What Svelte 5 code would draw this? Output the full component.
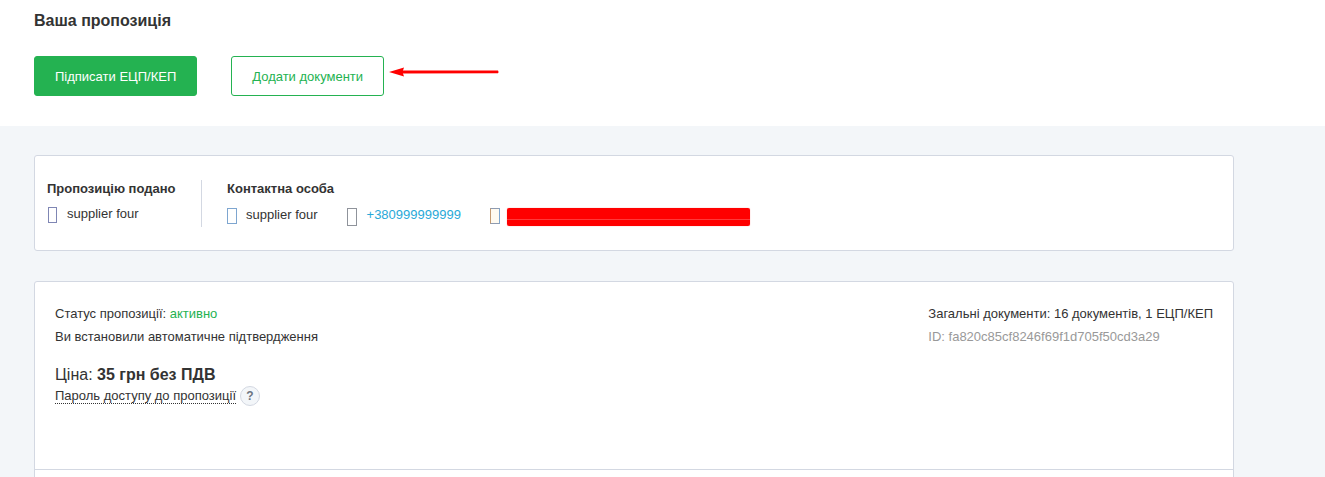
<script lang="ts">
  const docs = '16 документів, 1 ЕЦП/КЕП';
  const bidId = 'fa820c85cf8246f69f1d705f50cd3a29';
</script>

<main class="page">
  <section class="top">
    <h2>Ваша пропозиція</h2>
    <div class="actions">
      <button class="btn primary">Підписати ЕЦП/КЕП</button>
      <button class="btn outline">Додати документи</button>
      <svg class="arrow" width="112" height="12" viewBox="0 0 112 12">
        <path d="M12 4.6 L110 4.4 L110.6 6 L110 7.2 L12 7.6 Z" fill="#f00" />
        <path d="M1 6 L16 1.4 L14.5 6 L16 10.6 Z" fill="#f00" />
      </svg>
    </div>
  </section>

  <section class="content">
    <div class="card contacts">
      <div class="col first">
        <h4>Пропозицію подано</h4>
        <div class="row">
          <span class="item"><i class="tofu indigo"></i>supplier four</span>
        </div>
      </div>
      <div class="col second">
        <h4>Контактна особа</h4>
        <div class="row shifted">
          <span class="item"><i class="tofu blue"></i>supplier four</span>
          <span class="item phone"><i class="tofu grey"></i><span class="link">+380999999999</span></span>
          <span class="item mail"><i class="tofu orange"></i><span class="redact"></span></span>
        </div>
      </div>
    </div>

    <div class="card bid">
      <div class="bid-body">
        <div class="left">
          <p>Статус пропозиції: <span class="green">активно</span></p>
          <p>Ви встановили автоматичне підтвердження</p>
          <div class="price">Ціна: <b>35 грн без ПДВ</b></div>
          <div class="pass"><span class="dotted">Пароль доступу до пропозиції</span><span class="hint">?</span></div>
        </div>
        <div class="right">
          <p>Загальні документи: {docs}</p>
          <p class="muted">ID: {bidId}</p>
        </div>
      </div>
      <div class="bid-foot"></div>
    </div>
  </section>
</main>

<style>
  :global(body) {
    margin: 0;
    background: #f3f6f9;
    font-family: "Liberation Sans", Arial, sans-serif;
    color: #333;
  }

  .page {
    height: 477px;
    overflow: hidden;
  }

  .top {
    background: #fff;
    height: 126px;
    padding-left: 34px;
    box-sizing: border-box;
  }

  h2 {
    margin: 0;
    padding-top: 12px;
    font-size: 16px;
    line-height: 18px;
    font-weight: 700;
  }

  .actions {
    position: relative;
    display: flex;
    gap: 34px;
    margin-top: 26px;
  }

  .btn {
    height: 40px;
    padding: 0 20px;
    border-radius: 3px;
    font-family: inherit;
    font-size: 13px;
    box-sizing: border-box;
  }

  .primary {
    background: #24b251;
    border: 1px solid #24b251;
    color: #fff;
  }

  .outline {
    background: #fff;
    border: 1px solid #24b251;
    color: #24b251;
  }

  .arrow {
    position: absolute;
    left: 354px;
    top: 10px;
  }

  .content {
    padding: 29px 0 0 34px;
  }

  .card {
    width: 1200px;
    box-sizing: border-box;
    background: #fff;
    border: 1px solid #d3d8e2;
    border-radius: 3px;
    font-size: 13px;
  }

  .contacts {
    display: flex;
    height: 96px;
    padding: 24px 12px 0;
    margin-bottom: 30px;
  }

  .col {
    height: 47px;
  }

  .first {
    width: 154px;
    border-right: 1px solid #d3d8e2;
  }

  .second {
    padding-left: 25px;
  }

  h4 {
    margin: 0;
    font-size: 13px;
    line-height: 18px;
    font-weight: 700;
  }

  .row {
    display: flex;
    align-items: flex-start;
    margin-top: 7px;
  }

  .shifted {
    margin-top: 8px;
  }

  .item {
    display: flex;
    align-items: flex-start;
    line-height: 18px;
  }

  .tofu {
    display: block;
    width: 8px;
    height: 14px;
    margin: 2px 9px 0 0;
    border: 1px solid #8a8fa8;
  }

  .indigo {
    width: 7px;
    margin: 2px 10px 0 1px;
    border-color: #7f86b4;
  }

  .blue {
    border-color: #7ea6d0;
  }

  .grey {
    height: 16px;
    margin-right: 10px;
    border-color: #8f939b;
  }

  .orange {
    margin-right: 10px;
    border-color: #8e9bb0 #7ea6d0 #8e9bb0 #c49a70;
    background: #fffaf0;
  }

  .phone {
    margin-left: 29px;
  }

  .mail {
    margin-left: 29px;
  }

  .link {
    color: #29a9d8;
  }

  .redact {
    display: block;
    width: 243px;
    height: 18px;
    margin: 2px 0 0 -3px;
    border-radius: 2px;
    background: linear-gradient(#f00 11px, #ff3a3a 11px, #ff3a3a 12px, #f00 12px);
    box-shadow: 0 0 1px #ff6a6a;
  }

  .bid {
    height: 260px;
  }

  .bid-body {
    display: flex;
    justify-content: space-between;
    height: 188px;
    padding: 24px 20px 0;
    box-sizing: border-box;
    border-bottom: 1px solid #d3d8e2;
  }

  p {
    margin: 0 0 8px;
    line-height: 15px;
  }

  .green {
    color: #24b251;
  }

  .muted {
    color: #999;
  }

  .price {
    margin-top: 22px;
    font-size: 16px;
    line-height: 18px;
  }

  .pass {
    display: flex;
    align-items: center;
    margin-top: 2px;
    line-height: 15px;
  }

  .dotted {
    border-bottom: 1px dotted #333;
  }

  .hint {
    display: inline-block;
    width: 18px;
    height: 18px;
    margin-left: 4px;
    border: 1px solid #d3d8e2;
    border-radius: 50%;
    background: #f3f6f9;
    color: #6c7480;
    font-size: 12px;
    font-weight: 700;
    line-height: 18px;
    text-align: center;
  }
</style>
